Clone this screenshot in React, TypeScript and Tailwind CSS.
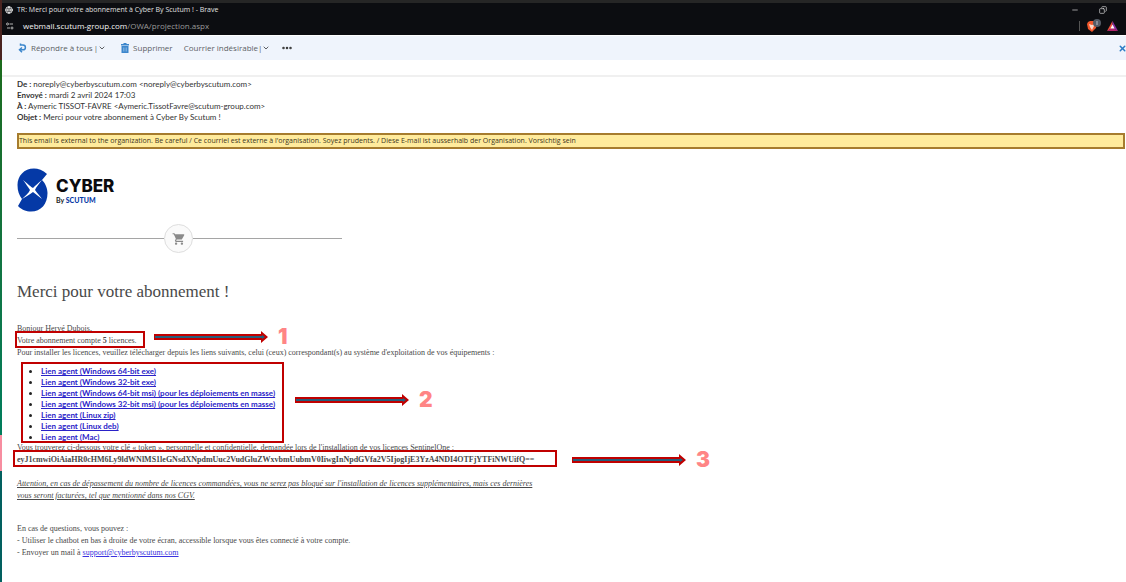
import type { ReactNode } from 'react'
import { ChevronDown, Globe, Minus, MoreHorizontal, Copy, X } from 'lucide-react'
import { MdShoppingCart } from 'react-icons/md'

const agents = [
    'Lien agent (Windows 64-bit exe)',
    'Lien agent (Windows 32-bit exe)',
    'Lien agent (Windows 64-bit msi) (pour les déploiements en masse)',
    'Lien agent (Windows 32-bit msi) (pour les déploiements en masse)',
    'Lien agent (Linux zip)',
    'Lien agent (Linux deb)',
    'Lien agent (Mac)',
]

/* Arrow and step number, drawn to the right of a framed block */
function Pointer({ step }: { step: number }) {
    return (
        <div className="flex items-center gap-[10px]">
            <svg width="114" height="12" viewBox="0 0 114 12" className="shrink-0">
                <path d="M0 3H107V0L114 6L107 12V9H0Z" fill="#c00000" />
                <path d="M1 5H108V4L111 6L108 8V7H1Z" fill="#24607d" />
            </svg>
            <span className="font-['Inter',sans-serif] text-[21px] leading-5 font-black text-[#ff8585]">{step}</span>
        </div>
    )
}

/* Red frame laid over the text it surrounds */
function Framed({ step, width, frame, pointer, children }: { step: number; width: string; frame: string; pointer: string; children: ReactNode }) {
    return (
        <div className={`relative w-fit ${width}`}>
            {children}
            <div className={`pointer-events-none absolute border-2 border-[#c00000] ${frame}`} />
            <div className={`absolute left-full ${pointer}`}>
                <Pointer step={step} />
            </div>
        </div>
    )
}

function Logo() {
    return (
        <div className="flex items-center gap-2">
            <svg width="31" height="44" viewBox="0 0 31 44" aria-label="Scutum">
                <path
                    d="M30 6C26 2 21 .5 17 .5C7 .5 .5 8 .5 17C.5 23 2 27 5 31L1 38C5 42 9 43.500 14 43.500C24 43.500 30.500 36 30.500 25C30.500 20 28 15 25 12Z"
                    fill="#0539a6"
                />
                <path d="M6 12C11 16 14 19 16 20C18 18 21 15 25 12C22 16 19 19 18 22C20 25 23 28 25 31C22 29 19 26 16 24C13 26 9 29 5 31C8 28 12 25 13 22C11 19 9 16 6 12Z" fill="#fff" />
            </svg>
            <div>
                <div className="font-['Inter',sans-serif] text-[17px] leading-5 font-extrabold text-[#0b0b0f]">CYBER</div>
                <div className="text-[7px] leading-[9px] font-bold text-[#222]">
                    By <span className="font-black text-[#0539a6]">SCUTUM</span>
                </div>
            </div>
        </div>
    )
}

function BrowserBar() {
    return (
        <header className="border-t-[3px] border-[#262626] bg-[#0c0d11] font-['Open_Sans',sans-serif] text-[#e0e0e0]">
            <div className="flex h-[14px] items-center pr-[19px] pl-[3px]">
                <Globe size={8} strokeWidth={3} />
                <span className="ml-1 text-[7px] leading-3">TR: Merci pour votre abonnement à Cyber By Scutum ! - Brave</span>
                <div className="ml-auto flex items-center gap-[20px]">
                    <button aria-label="Réduire"><Minus size={8} /></button>
                    <button aria-label="Restaurer"><Copy size={8} className="-scale-x-100" /></button>
                </div>
            </div>
            <div className="flex h-[18px] items-center pr-2 pl-1">
                <svg width="8" height="8" viewBox="0 0 8 8" fill="none" stroke="#b5b5b5">
                    <circle cx="1.500" cy="2" r="1" />
                    <path d="M3.500 2H7M1 6H4" />
                    <circle cx="6" cy="6" r="1" />
                </svg>
                <span className="ml-[9px] text-[8px] leading-3 text-[#f4f4f4]">
                    webmail.scutum-group.com<span className="text-[#9a9a9a]">/OWA/projection.aspx</span>
                </span>
                <div className="ml-auto flex items-center gap-[6px]">
                    <div className="h-[10px] w-px bg-[#555]" />
                    <svg width="15" height="14" viewBox="0 0 15 14">
                        <path d="M2 3L4 2H8L11 4L10 9L6 13L2 10L1 5Z" fill="#f2572b" />
                        <path d="M3 5L6 6L9 5L7 9L6 11L4 8Z" fill="#ffd8c7" />
                        <circle cx="11" cy="4" r="4" fill="#555b65" />
                        <path d="M11 2V6" stroke="#b8bcc4" />
                    </svg>
                    <svg width="11" height="10" viewBox="0 0 11 10">
                        <path d="M5.500 0L0 10L5.500 7Z" fill="#f0503a" />
                        <path d="M5.500 0L11 10L5.500 7Z" fill="#8a2fa0" />
                        <path d="M0 10L5.500 6.500L11 10Z" fill="#b0246a" />
                        <path d="M5.500 3.500L3.500 7.500H7.500Z" fill="#fff" />
                    </svg>
                </div>
            </div>
        </header>
    )
}

function Toolbar() {
    return (
        <nav className="mt-px flex h-6 items-center bg-[#eff4fc] pl-4 font-['Open_Sans',sans-serif] text-[8px] leading-3 text-[#5c5f64]">
            <button className="flex items-center">
                <svg width="9" height="10" viewBox="0 0 9 10" fill="none" stroke="#3c86cc" strokeWidth="1.500">
                    <path d="M2.500 .5V2H5A2.300 2.300 0 0 1 5 6.800H2M4 4.500L1.500 6.800L4 9.200" />
                </svg>
                <span className="ml-1">Répondre à tous</span>
                <span className="ml-px">|</span>
                <ChevronDown size={8} strokeWidth={3} />
            </button>
            <button className="ml-[15px] flex items-center gap-1">
                <svg width="8" height="10" viewBox="0 0 8 10">
                    <path d="M0 1H2.500V0H5.500V1H8V2.500H0ZM.5 3H7.500V10H.5Z" fill="#3c86cc" />
                    <path d="M2.500 4.500V8.500M4 4.500V8.500M5.500 4.500V8.500" stroke="#9cc4ea" strokeWidth=".6" />
                </svg>
                Supprimer
            </button>
            <button className="ml-[11px] flex items-center">
                <span>Courrier indésirable</span>
                <span>|</span>
                <ChevronDown size={8} strokeWidth={3} />
            </button>
            <button className="ml-[11px]" aria-label="Plus"><MoreHorizontal size={12} strokeWidth={3} color="#333" /></button>
            <button className="-mr-px ml-auto" aria-label="Fermer"><X size={9} strokeWidth={4} color="#2b7cc4" /></button>
        </nav>
    )
}

export default function App() {
    return (
        <div className="flex min-h-screen bg-white font-['Liberation_Serif',serif]">
            {/* sliver of the window behind */}
            <div className="flex w-[2px] shrink-0 flex-col">
                <div className="h-[60px] bg-[#4a2420]" />
                <div className="h-[375px] bg-linear-to-b from-[#1c6b1c] to-[#007d5c]" />
                <div className="h-9 bg-[#f78da0]" />
                <div className="grow bg-[#02605f]" />
            </div>
            <div className="min-w-0 grow overflow-hidden">
                <BrowserBar />
                <Toolbar />
                <main className="mt-[15px] border-t-2 border-[#f0f0f0] pt-[2px] pl-[15px] text-[#494949]">
                    <div className="font-['Lato',sans-serif] text-[8px] leading-[11px] text-[#333]">
                        <p><b>De :</b> noreply@cyberbyscutum.com &lt;noreply@cyberbyscutum.com&gt;</p>
                        <p><b>Envoyé :</b> mardi 2 avril 2024 17:03</p>
                        <p><b>À :</b> Aymeric TISSOT-FAVRE &lt;Aymeric.TissotFavre@scutum-group.com&gt;</p>
                        <p><b>Objet :</b> Merci pour votre abonnement à Cyber By Scutum !</p>
                    </div>

                    <div className="mt-[10px] mr-px border-2 border-[#a67c2e] bg-[#ffeb9c] font-['Open_Sans',sans-serif] text-[7px] leading-3 text-[#3d3520]">
                        This email is external to the organization. Be careful / Ce courriel est externe à l'organisation. Soyez prudents. / Diese E-mail ist ausserhalb der Organisation. Vorsichtig sein
                    </div>

                    <div className="mt-[19px] font-['Lato',sans-serif]">
                        <Logo />
                    </div>

                    <div className="mt-3 flex w-[325px] items-center">
                        <div className="h-px w-[147px] bg-[#a5a5a5]" />
                        <div className="flex size-[29px] items-center justify-center rounded-full border border-[#dedede] bg-[#fafafa]">
                            <MdShoppingCart size={14} color="#8a8a8a" />
                        </div>
                        <div className="h-px grow bg-[#a5a5a5]" />
                    </div>

                    <h1 className="mt-[29px] text-[17px] leading-5">Merci pour votre abonnement !</h1>

                    <div className="mt-[21px] text-[8px] leading-3">
                        <p>Bonjour Hervé Dubois,</p>
                        <Framed step={1} width="min-w-[124px]" frame="-top-1 -right-1 -bottom-px -left-[2px]" pointer="-top-2 ml-[13px]">
                            <p>Votre abonnement compte <b>5</b> licences.</p>
                        </Framed>
                        <p>Pour installer les licences, veuillez télécharger depuis les liens suivants, celui (ceux) correspondant(s) au système d'exploitation de vos équipements :</p>

                        <div className="mt-[7px] -mb-px ml-6">
                            <Framed step={2} width="min-w-[241px]" frame="-top-1 -right-[2px] bottom-0 -left-5" pointer="top-6 ml-[13px]">
                                <ul className="list-disc font-['Lato',sans-serif] text-[8px] leading-[11px] font-bold marker:text-[#222]">
                                    {agents.map((name) => (
                                        <li key={name}>
                                            <a href="#" className="text-[#2a22c8] underline">{name}</a>
                                        </li>
                                    ))}
                                </ul>
                            </Framed>
                        </div>

                        <p>Vous trouverez ci-dessous votre clé « token », personnelle et confidentielle, demandée lors de l'installation de vos licences SentinelOne :</p>
                        <Framed step={3} width="min-w-[538px]" frame="-top-1 -right-[2px] -bottom-px -left-1" pointer="-top-1 ml-[17px]">
                            <p className="font-bold">eyJ1cmwiOiAiaHR0cHM6Ly9ldWNlMS1leGNsdXNpdmUuc2VudGluZWxvbmUubmV0IiwgInNpdGVfa2V5IjogIjE3YzA4NDI4OTFjYTFiNWUifQ==</p>
                        </Framed>

                        <p className="mt-3 max-w-[530px] italic underline">
                            Attention, en cas de dépassement du nombre de licences commandées, vous ne serez pas bloqué sur l'installation de licences supplémentaires, mais ces dernières vous seront facturées, tel que mentionné dans nos CGV.
                        </p>

                        <div className="mt-[21px] mb-6">
                            <p>En cas de questions, vous pouvez :</p>
                            <p>- Utiliser le chatbot en bas à droite de votre écran, accessible lorsque vous êtes connecté à votre compte.</p>
                            <p>- Envoyer un mail à <a href="mailto:support@cyberbyscutum.com" className="text-[#3a32e0] underline">support@cyberbyscutum.com</a></p>
                        </div>
                    </div>
                </main>
            </div>
        </div>
    )
}
